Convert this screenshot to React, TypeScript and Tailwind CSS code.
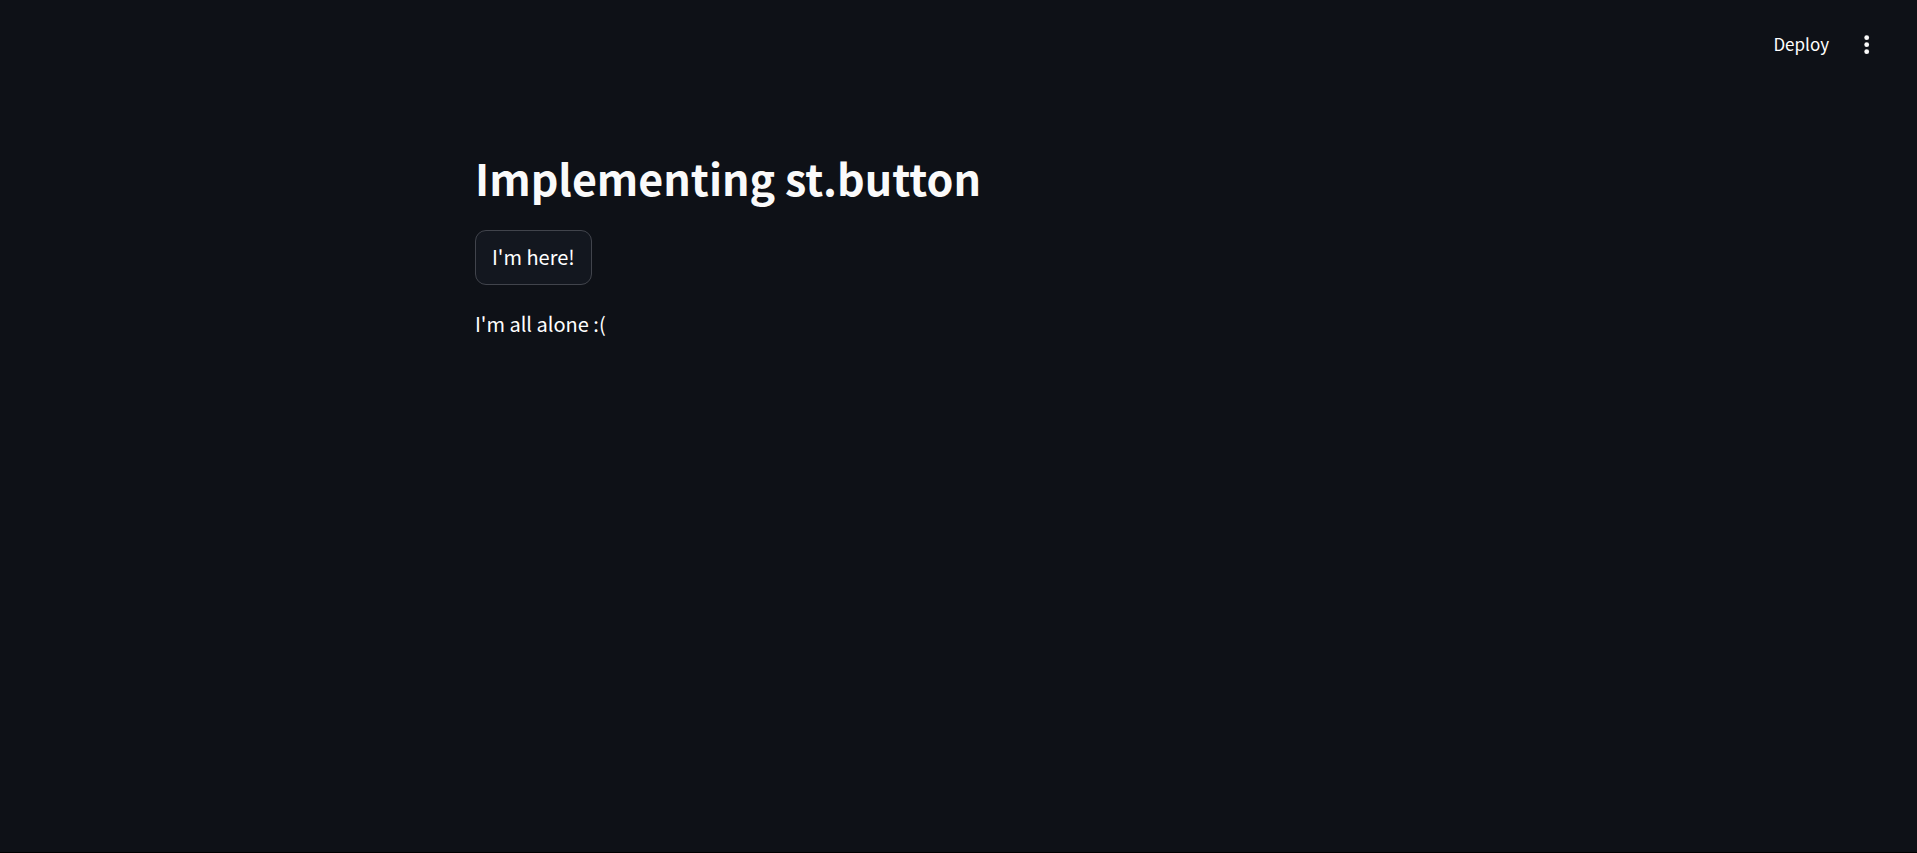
import React from "react";

export default function App() {
  return (
    <div className="flex min-h-screen flex-col border-b border-black bg-[#0e1117] font-['Noto_Sans_CJK_SC',sans-serif] text-[#fafafa]">
      <header className="flex h-[88px] items-center justify-end gap-5 px-10">
        <button type="button" className="px-2 text-[17px] leading-7 text-white">
          Deploy
        </button>
        <button type="button" aria-label="Main menu" className="flex w-5 justify-center">
          <svg viewBox="0 0 8 24" className="h-6 w-2" fill="currentColor" aria-hidden="true">
            <circle cx="3.7" cy="5.7" r="2.4" />
            <circle cx="3.7" cy="12.7" r="2.4" />
            <circle cx="3.7" cy="19.7" r="2.4" />
          </svg>
        </button>
      </header>
      <main className="mx-auto flex w-full max-w-[967px] flex-1 flex-col items-start pt-14">
        <h1 className="text-[43px] leading-[66px] font-bold">Implementing st.button</h1>
        <button
          type="button"
          className="mt-5 h-[55px] rounded-[11px] border border-[#41444c] bg-[#13171f] px-4 pb-0.5 text-[20px] leading-8 text-white"
        >
          I'm here!
        </button>
        <p className="mt-[23px] text-[20px] leading-8 text-white">I'm all alone :(</p>
      </main>
    </div>
  );
}
